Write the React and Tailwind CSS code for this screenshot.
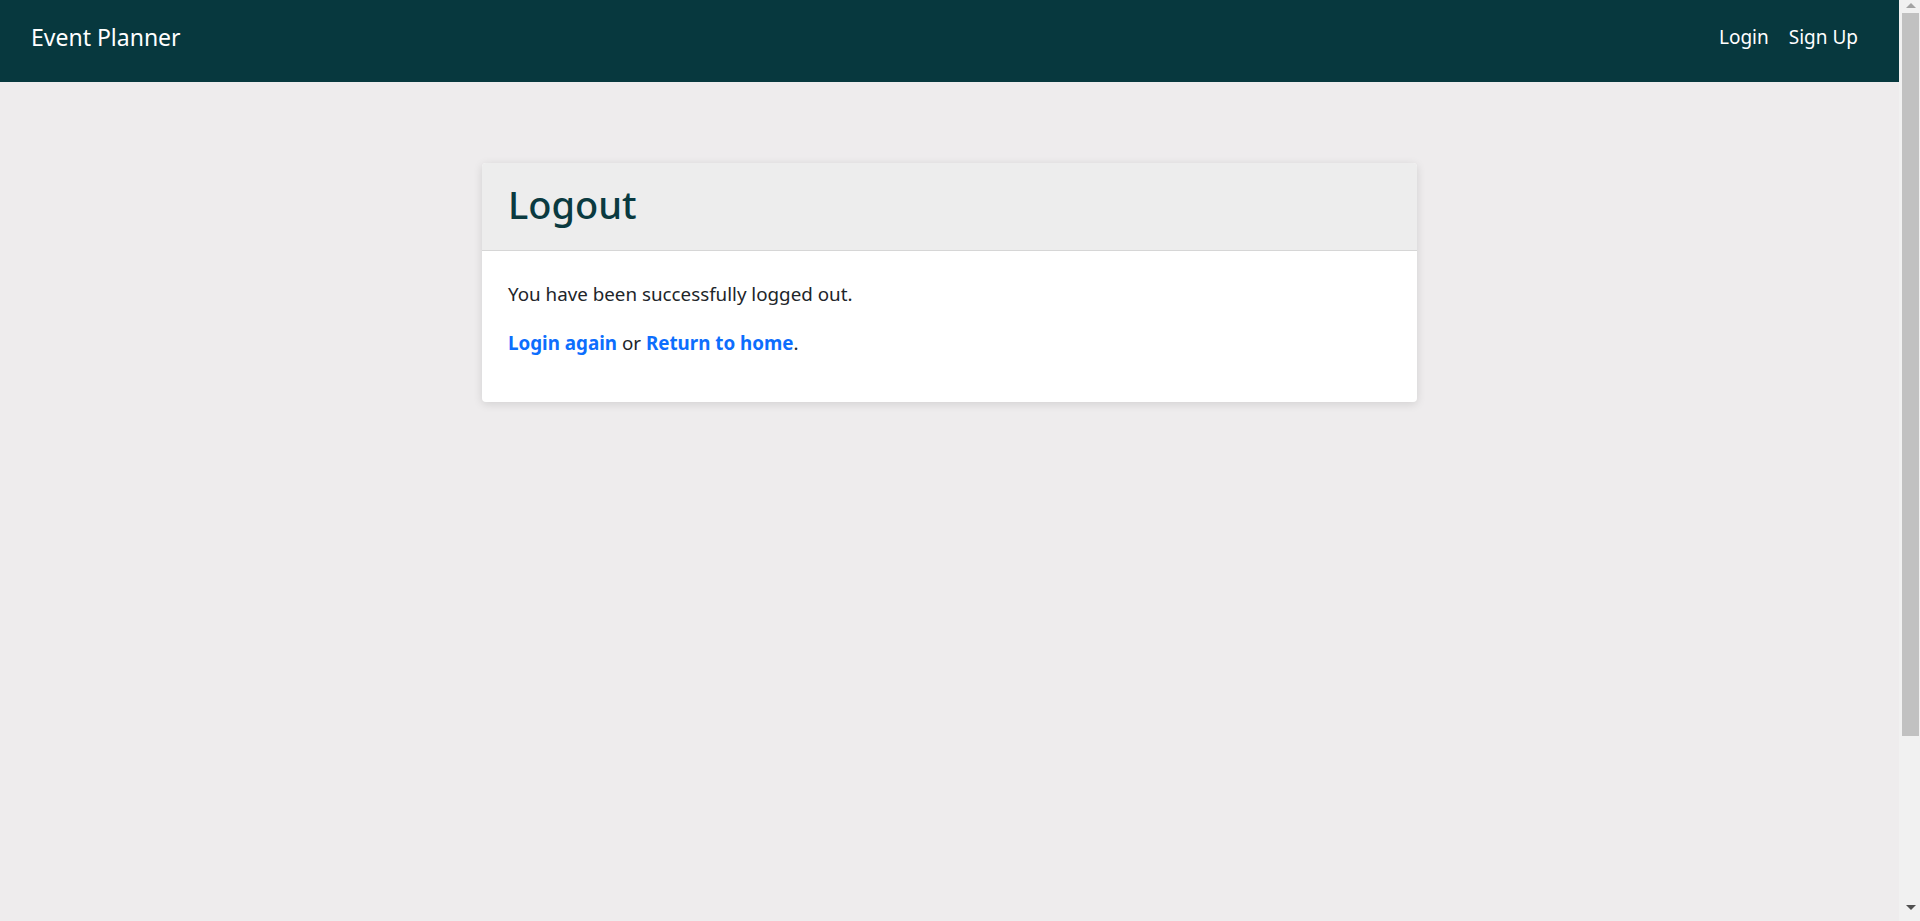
import React from "react";

export default function App() {
  return (
    <div
      className="flex h-screen overflow-hidden bg-[#eeeced]"
      style={{ fontFamily: '"Noto Sans", "Open Sans", sans-serif' }}
    >
      <div className="min-w-0 flex-1">
        {/* ================= NAVBAR ================= */}
        <nav className="flex h-[82px] items-center justify-between bg-[#07383e] pb-[7px] pl-[31px] pr-[41px] text-white">
          <span className="text-[23px]">Event Planner</span>
          <div className="flex items-center gap-[20px] text-[19px]">
            <a href="#">Login</a>
            <a href="#">Sign Up</a>
          </div>
        </nav>

        {/* ================= CARD ================= */}
        <div className="mx-auto mt-[81px] w-[935px] overflow-hidden rounded-[4px] bg-white shadow-[0_2px_10px_rgba(0,0,0,0.12)]">
          <div className="flex h-[88px] items-center border-b border-[#d6d6d6] bg-[#ededed] px-[26px] pb-[5px]">
            <h1 className="text-[38px] font-medium text-[#0a3a40]">Logout</h1>
          </div>
          <div className="px-[26px] pb-[23px] pt-[29px] text-[18.8px] text-[#212529]">
            <p className="mb-[21px]">You have been successfully logged out.</p>
            <p className="mb-[22px]">
              <a href="#" className="font-bold text-[#0d6efd]">
                Login again
              </a>{" "}
              or{" "}
              <a href="#" className="font-bold text-[#0d6efd]">
                Return to home
              </a>
              .
            </p>
          </div>
        </div>
      </div>

      {/* ================= SCROLLBAR ================= */}
      <div className="flex w-[21px] shrink-0 flex-col items-center bg-[#f1f1f1] pl-[2px] pt-[3px]">
        <div className="h-0 w-0 border-x-[5px] border-b-[5px] border-x-transparent border-b-[#a3a3a3]" />
        <div className="mt-[5px] h-[723px] w-[17px] bg-[#c1c1c1]" />
        <div className="mt-auto mb-[11px] h-0 w-0 border-x-[5px] border-t-[5px] border-x-transparent border-t-[#505050]" />
      </div>
    </div>
  );
}
